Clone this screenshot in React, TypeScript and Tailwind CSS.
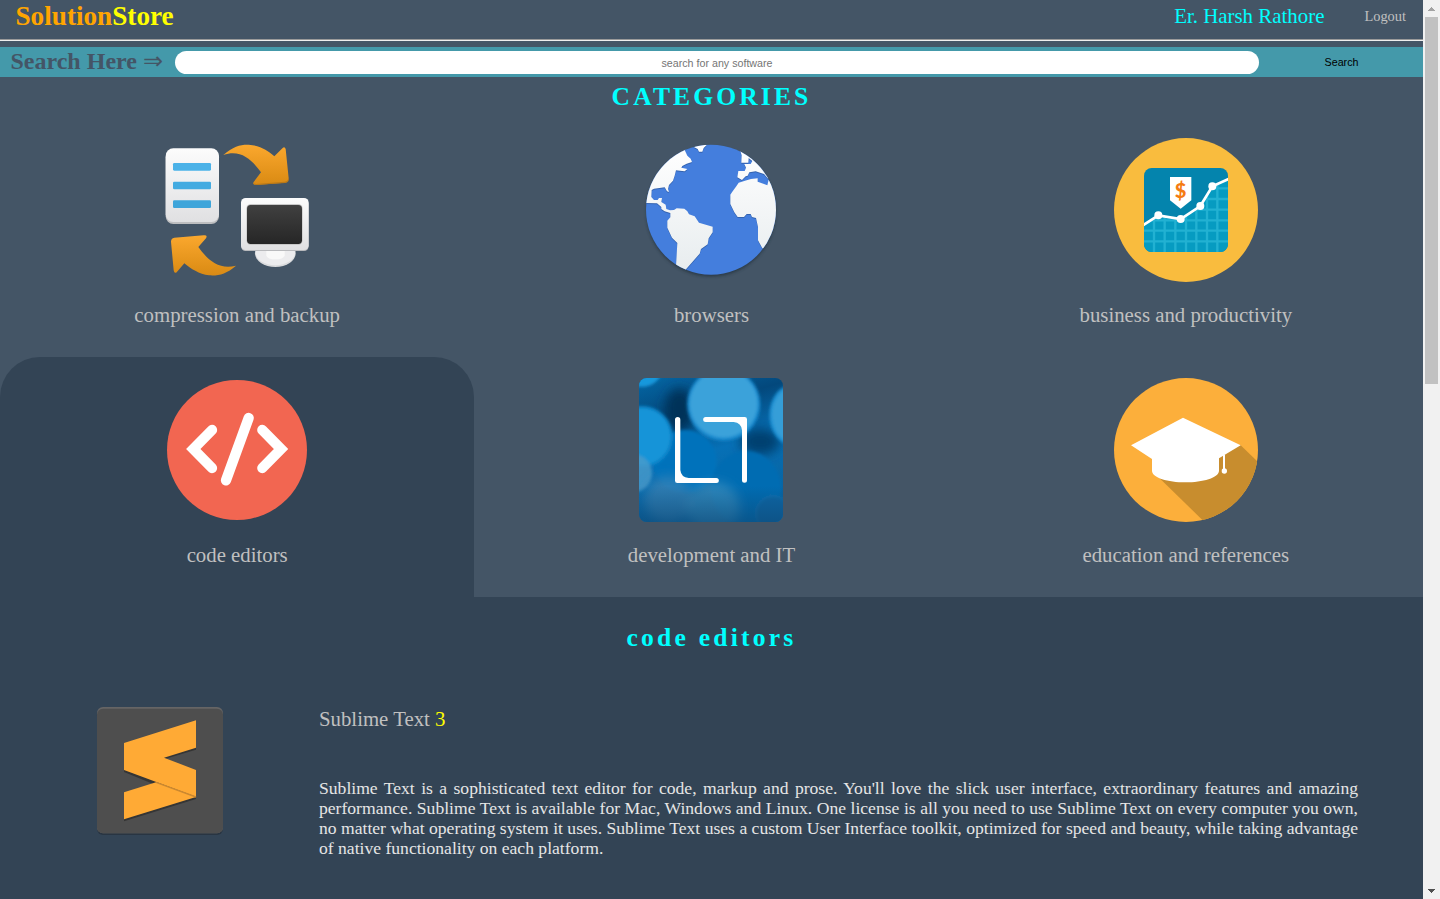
import type { ReactNode } from "react";

function BackupIcon() {
  return (
    <svg width="144" height="144" viewBox="45 24 432 432">
      <defs>
        <linearGradient id="paper" x1="0" y1="0" x2="0" y2="1">
          <stop offset="0" stopColor="#fcfcfc" />
          <stop offset="1" stopColor="#e0e0e2" />
        </linearGradient>
        <linearGradient id="arrowDown" x1="0" y1="0" x2="0" y2="1">
          <stop offset="0" stopColor="#fba82e" />
          <stop offset="0.8" stopColor="#e09018" />
          <stop offset="1" stopColor="#d88a16" />
        </linearGradient>
        <linearGradient id="screen" x1="0" y1="0" x2="0" y2="1">
          <stop offset="0" stopColor="#404040" />
          <stop offset="1" stopColor="#262626" />
        </linearGradient>
      </defs>
      <rect x="47" y="59" width="160" height="223" rx="23" fill="#bdbec0" />
      <rect x="47" y="55" width="160" height="221" rx="23" fill="url(#paper)" />
      <rect x="69" y="99" width="114" height="23" rx="4" fill="#4bb2e8" />
      <rect x="69" y="155" width="114" height="23" rx="4" fill="#43abe1" />
      <rect x="69" y="211" width="114" height="23" rx="4" fill="#3ea5da" />
      <path d="M220 75C250 48 274 43 296 44C332 47 353 61 373 79L398 54Q404 49 407 57L416 145Q416 156 405 158L318 165Q306 165 311 156L333 127C306 90 273 57 220 75Z" fill="url(#arrowDown)" />
      <path d="M310 160L318 162L405 155Q415 153 415 143L416 151Q415 158 405 159L318 165Q311 165 310 160Z" fill="#ba7817" />
      <path d="M258 407C229 432 205 438 177 436C148 433 122 416 103 400L80 427Q73 432 71 421L63 335Q63 325 73 323L161 316Q174 315 168 325L145 351C173 390 208 421 258 407Z" fill="url(#arrowDown)" />
      <ellipse cx="376" cy="370" rx="61" ry="41" fill="#dadbdd" />
      <ellipse cx="376" cy="368" rx="59" ry="38" fill="#ececee" />
      <path d="M349 355H404V377Q399 388 376 388T349 377Z" fill="#f9f9f9" />
      <rect x="273" y="208" width="203" height="155" rx="14" fill="#b9babd" />
      <rect x="273" y="204" width="203" height="156" rx="14" fill="url(#paper)" />
      <rect x="289" y="222" width="169" height="123" rx="14" fill="#c8c8c8" />
      <rect x="291" y="225" width="165" height="117" rx="11" fill="url(#screen)" />
    </svg>
  );
}

function GlobeIcon() {
  return (
    <svg width="144" height="144" viewBox="27 24 432 432" className="overflow-visible">
      <defs>
        <linearGradient id="land" x1="0" y1="45" x2="0" y2="435" gradientUnits="userSpaceOnUse">
          <stop offset="0" stopColor="#ffffff" />
          <stop offset="1" stopColor="#e7ecee" />
        </linearGradient>
        <clipPath id="globe">
          <circle cx="243" cy="239" r="195" />
        </clipPath>
        <filter id="globeShade" x="-10%" y="-10%" width="120%" height="120%">
          <feGaussianBlur stdDeviation="4" />
        </filter>
      </defs>
      <circle cx="243" cy="246" r="194" fill="#1d2935" opacity="0.6" filter="url(#globeShade)" />
      <circle cx="243" cy="239" r="195" fill="#447edd" />
      <g clipPath="url(#globe)">
        {[
          { dy: 3, fill: "#3463af" },
          { dy: 0, fill: "url(#land)" },
        ].map((layer) => (
          <g key={layer.dy} transform={`translate(0 ${layer.dy})`} fill={layer.fill}>
            <path d="M40 40H168L165 62L172 77L182 86L186 96L170 101L157 108L154 113L172 117L164 124L150 122L138 121L134 137L129 152L117 165L114 177L117 186L111 184L104 172L88 174L72 176L65 180L64 201L72 210H83L87 204H96L94 216L107 224L109 237L120 241L132 240L140 235L163 236L172 244L177 253L194 259L207 278L248 290V307L236 325L233 343L213 357L209 371L166 420L138 408L142 339L126 323L112 293V272L121 262V249L104 244L94 237V231L81 220L48 219L36 225Z" />
            <path d="M190 50L203 57L207 65H217L221 54L230 45L210 38Z" />
            <path d="M330 60L335 76L334 98H355L356 84L367 93L362 102H343L348 113L344 123H325L322 142L336 150L347 139L353 137L358 127L377 124L402 132L415 147L423 142V110L380 68Z" />
            <path d="M350 151L363 147L383 145L383 155L412 166L416 149L445 180V360L397 355L384 331V291L378 264L366 261L362 252H350L342 261H323L313 247L301 222V194L308 184L320 167L326 158Z" />
          </g>
        ))}
      </g>
    </svg>
  );
}

function BusinessIcon() {
  return (
    <svg width="144" height="144" viewBox="42 24 432 432">
      <defs>
        <clipPath id="chartCard">
          <rect x="132" y="114" width="252" height="252" rx="23" />
        </clipPath>
        <clipPath id="chartArea">
          <path d="M132 283L175 256L242 267L301 228L337 169L384 147V366H132Z" />
        </clipPath>
      </defs>
      <circle cx="258" cy="240" r="216" fill="#f9bc3e" />
      <g clipPath="url(#chartCard)">
        <rect x="132" y="114" width="252" height="252" fill="#0484ad" />
        <g clipPath="url(#chartArea)">
          <rect x="132" y="114" width="252" height="252" fill="#069bc1" />
          <path d="M162 114V366M194 114V366M226 114V366M258 114V366M289 114V366M321 114V366M352 114V366M132 175H384M132 207H384M132 239H384M132 271H384M132 302H384M132 334H384" stroke="#22b1d2" strokeWidth="7" />
        </g>
        <path d="M126 288L175 256L242 267L301 228L337 169L390 145" fill="none" stroke="#fff" strokeWidth="8" />
      </g>
      <circle cx="175" cy="256" r="12" fill="#fff" />
      <circle cx="242" cy="267" r="12" fill="#fff" />
      <circle cx="301" cy="228" r="12" fill="#fff" />
      <circle cx="337" cy="169" r="12" fill="#fff" />
      <path d="M210 141H274V211L242 236L210 211Z" fill="#fff" />
      <text x="242" y="205" textAnchor="middle" fontFamily="Lato, sans-serif" fontWeight="900" fontSize="60" fill="#f57c12">
        $
      </text>
    </svg>
  );
}

function CodeIcon() {
  return (
    <svg width="144" height="144" viewBox="45 84 432 432">
      <circle cx="261" cy="300" r="210" fill="#f26651" />
      <g fill="none" stroke="#fff" strokeWidth="31" strokeLinecap="round">
        <path d="M186 240L130 297L186 354" />
        <path d="M337 240L393 297L337 354" />
        <path d="M296 204L228 391" />
      </g>
    </svg>
  );
}

function DevelopmentIcon() {
  return (
    <svg width="144" height="144" viewBox="27 24 432 432">
      <defs>
        <linearGradient id="bokehBase" x1="0" y1="0" x2="0.3" y2="1">
          <stop offset="0" stopColor="#0467a5" />
          <stop offset="0.3" stopColor="#03487c" />
          <stop offset="0.6" stopColor="#0670b6" />
          <stop offset="1" stopColor="#0864a2" />
        </linearGradient>
        <linearGradient id="bokehFade" x1="0" y1="0" x2="0" y2="1">
          <stop offset="0.75" stopColor="#0d4a78" stopOpacity="0" />
          <stop offset="1" stopColor="#0d4a78" stopOpacity="0.65" />
        </linearGradient>
        <clipPath id="bokehCard">
          <rect x="27" y="24" width="432" height="432" rx="23" />
        </clipPath>
        <filter id="soft" x="-20%" y="-20%" width="140%" height="140%">
          <feGaussianBlur stdDeviation="5" />
        </filter>
        <filter id="softer" x="-40%" y="-40%" width="180%" height="180%">
          <feGaussianBlur stdDeviation="16" />
        </filter>
      </defs>
      <g clipPath="url(#bokehCard)">
        <rect x="27" y="24" width="432" height="432" fill="url(#bokehBase)" />
        <ellipse cx="148" cy="120" rx="45" ry="65" fill="#033259" filter="url(#softer)" />
        <ellipse cx="390" cy="215" rx="60" ry="40" fill="#03406f" filter="url(#softer)" />
        <g filter="url(#soft)">
          <circle cx="165" cy="275" r="95" fill="#0672bb" />
          <ellipse cx="348" cy="355" rx="106" ry="112" fill="#066cb2" />
          <circle cx="36" cy="200" r="92" fill="#0d86cb" />
          <circle cx="36" cy="200" r="84" fill="#1594d8" />
          <ellipse cx="35" cy="0" rx="60" ry="50" fill="#1898dc" />
          <circle cx="281" cy="103" r="110" fill="#1488cd" />
          <circle cx="281" cy="101" r="102" fill="#3aa2da" />
          <ellipse cx="490" cy="135" rx="72" ry="92" fill="#1b8fd2" />
          <ellipse cx="492" cy="135" rx="66" ry="84" fill="#359ed8" />
          <circle cx="8" cy="310" r="58" fill="#4a9bca" opacity="0.8" />
          <circle cx="430" cy="430" r="52" fill="#0866a5" stroke="#177ebd" strokeWidth="3" />
        </g>
        <g filter="url(#softer)">
          <circle cx="115" cy="390" r="72" fill="#4085b4" opacity="0.65" />
          <circle cx="250" cy="415" r="80" fill="#4a96c2" opacity="0.6" />
        </g>
        <rect x="27" y="24" width="432" height="432" fill="url(#bokehFade)" />
      </g>
      <g fill="#fff">
        <path d="M135 149A8 8 0 0 1 151 149V300Q153 322 176 324H259A7.500 7.500 0 0 1 259 339H142Q135 339 135 332Z" />
        <path d="M351 331A7.500 7.500 0 0 1 336 331V181Q334 158 311 156H227A7.500 7.500 0 0 1 227 141H344Q351 141 351 148Z" />
      </g>
    </svg>
  );
}

function EducationIcon() {
  return (
    <svg width="144" height="144" viewBox="42 24 432 432">
      <defs>
        <clipPath id="capDisc">
          <circle cx="258" cy="240" r="216" />
        </clipPath>
      </defs>
      <circle cx="258" cy="240" r="216" fill="#fcaf3b" />
      <g clipPath="url(#capDisc)">
        <path d="M422 226L490 291V480H338L168 314L300 250Z" fill="#c88d2e" />
      </g>
      <path d="M249 143L422 226L357 265V302C357 323 308 337 256 337S156 323 156 302V267L93 226Z" fill="#fff" />
      <path d="M372 254V298" stroke="#fff" strokeWidth="6" />
      <circle cx="373" cy="303" r="8" fill="#fff" />
    </svg>
  );
}

function SublimeIcon() {
  return (
    <svg width="128" height="130" viewBox="48 48 384 390">
      <rect x="51" y="58" width="378" height="377" rx="18" fill="#293542" />
      <rect x="51" y="51" width="378" height="379" rx="18" fill="#666565" />
      <rect x="51" y="56" width="378" height="374" rx="18" fill="#4e4e4e" />
      <g fill="#353535">
        <path d="M132 313L348 245V327L132 394Z" />
        <path d="M132 165L348 98V179L254 207L240 290L132 246Z" />
      </g>
      <path d="M132 307L228 277L348 321L132 388Z" fill="#ffaa35" />
      <path d="M132 159L348 91V173L252 203L348 240V320L132 240Z" fill="#ffaa35" />
      <path d="M228 277L348 321" stroke="#cc8930" strokeWidth="4" />
    </svg>
  );
}

function Category({ icon, label, active }: { icon: ReactNode; label: string; active?: boolean }) {
  return (
    <a
      className={
        active
          ? "flex h-60 flex-col items-center rounded-t-[40px] bg-[#334455] pt-[21px]"
          : "flex h-60 flex-col items-center pt-[21px]"
      }
    >
      {icon}
      <span className="mt-[21px] text-[20.8px] leading-6 text-[#c0c0c0]">{label}</span>
    </a>
  );
}

function Scrollbar() {
  return (
    <div className="flex h-full w-[17px] shrink-0 flex-col items-center bg-[#f1f1f1]">
      <svg width="17" height="17" viewBox="0 0 17 17" shapeRendering="crispEdges">
        <path d="M8 7h1v1h1v1h1v1h1v1H5v-1h1V9h1V8h1z" fill="#a3a3a3" />
      </svg>
      <div className="h-[367px] w-[13px] bg-[#c1c1c1]" />
      <svg width="17" height="17" viewBox="0 0 17 17" shapeRendering="crispEdges" className="mt-auto">
        <path d="M5 7h7v1h-1v1h-1v1H9v1H8v-1H7V9H6V8H5z" fill="#505050" />
      </svg>
    </div>
  );
}

export default function App() {
  return (
    <div className="flex h-[899px] w-[1440px] overflow-hidden bg-[#445566] font-['Liberation_Serif',serif]">
      <div className="flex min-w-0 flex-1 flex-col">
        <header className="flex h-[39px] items-start justify-between pr-[17px] pl-[15.500px]">
          <h1 className="pt-px text-[27.2px] leading-[31px] font-bold text-[#ffa500]">
            Solution<span className="text-[#ffff00]">Store</span>
          </h1>
          <nav className="flex items-start gap-[40px]">
            <span className="pt-px text-[20.9px] leading-[31px] text-[#00ffff]">Er. Harsh Rathore</span>
            <a className="text-[14.4px] leading-8 text-[#c0c0c0]">Logout</a>
          </nav>
        </header>
        <div className="h-[2px] shrink-0 border-t border-b border-t-[#9a9a9a] border-b-[#eeeeee]" />

        <form className="mt-[6px] flex h-[30px] shrink-0 items-start bg-[#4499aa]">
          <label className="w-[175px] pl-[10.500px] text-2xl leading-[29px] font-bold whitespace-nowrap text-[#445566]">
            Search Here <span className="font-normal">⇒</span>
          </label>
          <input
            type="text"
            placeholder="search for any software"
            className="mt-1 h-[23px] w-[1084px] rounded-[12px] bg-white pt-px text-center font-['Liberation_Sans',sans-serif] text-[10.7px] text-black placeholder:text-[#757575]"
          />
          <button
            type="button"
            className="flex-1 pl-px font-['Liberation_Sans',sans-serif] text-[10.7px] leading-[31px] text-black"
          >
            Search
          </button>
        </form>

        <h2 className="h-10 shrink-0 text-center text-[25.6px] leading-10 font-bold tracking-[3.1px] text-[#00ffff]">
          CATEGORIES
        </h2>

        <section className="grid shrink-0 grid-cols-3">
          <Category icon={<BackupIcon />} label="compression and backup" />
          <Category icon={<GlobeIcon />} label="browsers" />
          <Category icon={<BusinessIcon />} label="business and productivity" />
          <Category icon={<CodeIcon />} label="code editors" active />
          <Category icon={<DevelopmentIcon />} label="development and IT" />
          <Category icon={<EducationIcon />} label="education and references" />
        </section>

        <section className="flex-1 bg-[#334455] pt-[21px]">
          <h2 className="text-center text-[25.6px] leading-10 font-bold tracking-[3.2px] text-[#00ffff]">code editors</h2>
          <article className="mt-12 flex">
            <div className="flex w-[319px] shrink-0 justify-center">
              <SublimeIcon />
            </div>
            <div className="w-[1039px]">
              <h3 className="pt-px text-[20.8px] leading-6 text-[#c0c0c0]">
                Sublime Text <span className="text-[#ffff00]">3</span>
              </h3>
              <p className="mt-[47px] text-justify text-[17.6px] leading-5 text-[#e6e6e6]">
                Sublime Text is a sophisticated text editor for code, markup and prose. You'll love the slick user
                interface, extraordinary features and amazing performance. Sublime Text is available for Mac, Windows
                and Linux. One license is all you need to use Sublime Text on every computer you own, no matter what
                operating system it uses. Sublime Text uses a custom User Interface toolkit, optimized for speed and
                beauty, while taking advantage of native functionality on each platform.
              </p>
            </div>
          </article>
        </section>
      </div>
      <Scrollbar />
    </div>
  );
}
